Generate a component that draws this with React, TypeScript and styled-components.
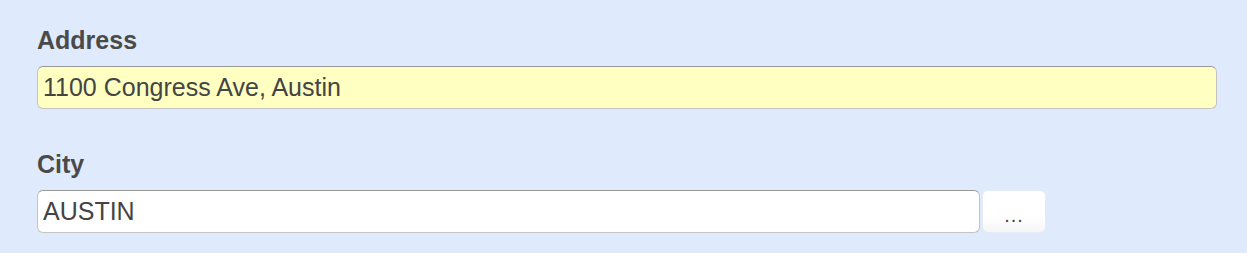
import styled, { createGlobalStyle } from "styled-components";

const Global = createGlobalStyle`
  html, body {
    margin: 0;
    padding: 0;
    background: #dfeafc;
  }
  body {
    font-family: "Liberation Sans", Arial, sans-serif;
  }
`;

const Form = styled.div`
  width: 1247px;
  height: 253px;
  box-sizing: border-box;
  padding: 25px 30px 0 37px;
  display: flex;
  flex-direction: column;
  gap: 40px;
`;

const Field = styled.div`
  display: flex;
  flex-direction: column;
  gap: 11px;
`;

const Label = styled.label`
  font-size: 25px;
  font-weight: bold;
  color: #4a4a4a;
  line-height: 30px;
`;

const Row = styled.div`
  display: flex;
  gap: 2px;
`;

const Input = styled.input<{ bg: string; w: number }>`
  width: ${({ w }) => w}px;
  height: 43px;
  box-sizing: border-box;
  border: 1px solid #c4c4c4;
  border-top-color: #9a9a9a;
  border-radius: 6px;
  background: ${({ bg }) => bg};
  padding: 0 5px;
  font-family: "Liberation Sans", Arial, sans-serif;
  font-size: 25px;
  color: #444;
  outline: none;
`;

const Button = styled.button`
  width: 64px;
  height: 43px;
  box-sizing: border-box;
  border: 1px solid #e6ecf4;
  border-radius: 6px;
  background: linear-gradient(#ffffff, #ffffff 60%, #f6f6f6);
  font-family: "Liberation Sans", Arial, sans-serif;
  font-size: 20px;
  letter-spacing: 1px;
  color: #444;
  padding: 8px 0 0;
  cursor: pointer;
`;

export default function App() {
  return (
    <>
      <Global />
      <Form>
        <Field>
          <Label>Address</Label>
          <Input bg="#ffffc2" w={1180} defaultValue="1100 Congress Ave, Austin" />
        </Field>
        <Field>
          <Label>City</Label>
          <Row>
            <Input bg="#ffffff" w={943} defaultValue="AUSTIN" />
            <Button>...</Button>
          </Row>
        </Field>
      </Form>
    </>
  );
}
